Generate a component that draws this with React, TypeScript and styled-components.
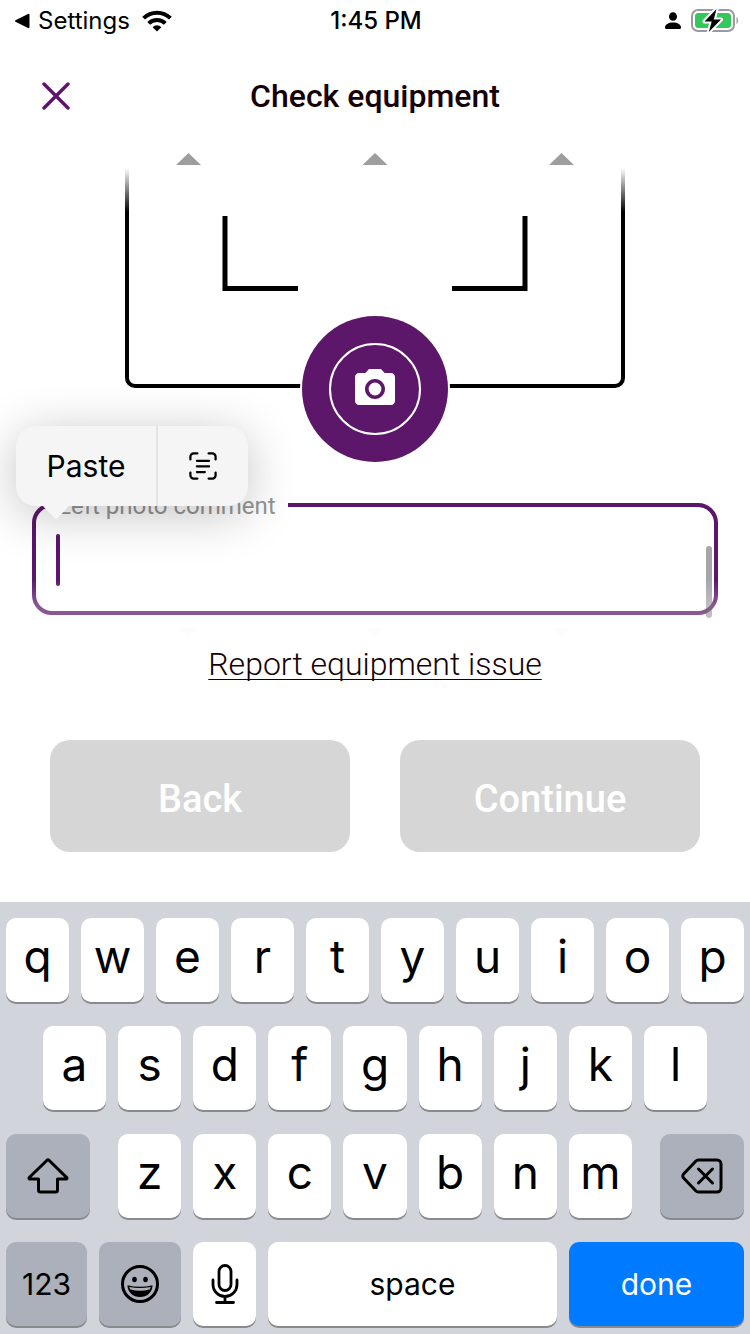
import React from "react";
import styled, { createGlobalStyle, css } from "styled-components";
import { MdCameraAlt } from "react-icons/md";

const purple = "#5c166a";
const brandFont = `Roboto, "Open Sans", sans-serif`;
const systemFont = `Inter, "Liberation Sans", sans-serif`;

const GlobalStyle = createGlobalStyle`
  * { box-sizing: border-box; }
  body { margin: 0; background: #fff; }
  button, textarea { font: inherit; color: inherit; border: 0; padding: 0; margin: 0; background: none; }
`;

const Screen = styled.div`
  display: flex;
  flex-direction: column;
  min-height: 100vh;
  background: #fff;
  color: #000;
  font-family: ${systemFont};
`;

const StatusBar = styled.div`
  display: grid;
  grid-template-columns: 1fr auto 1fr;
  align-items: center;
  height: 40px;
  padding: 2px 12px 0 14px;
  font-size: 24px;
  line-height: 32px;
`;

const StatusGroup = styled.div<{ $end?: boolean }>`
  display: flex;
  align-items: center;
  gap: ${(p) => (p.$end ? 10 : 12)}px;
  justify-content: ${(p) => (p.$end ? "flex-end" : "flex-start")};
`;

const BackToApp = styled.a`
  display: flex;
  align-items: center;
  gap: 8px;
  color: inherit;
  text-decoration: none;
`;

const Clock = styled.time`
  font-weight: 500;
`;

const Header = styled.header`
  display: grid;
  grid-template-columns: 48px 1fr 48px;
  align-items: center;
  height: 112px;
  padding: 0 32px;
`;

const CloseButton = styled.button`
  display: grid;
  place-items: center;
  width: 48px;
  height: 48px;
`;

const Title = styled.h1`
  margin: 0;
  text-align: center;
  font: 500 32px/48px ${brandFont};
  color: #140005;
`;

const Main = styled.main`
  display: flex;
  flex-direction: column;
  flex: 1;
`;

const Viewfinder = styled.section`
  display: flex;
  flex-direction: column;
  align-items: center;
  padding: 0 16px;
`;

const FrameDrawing = styled.svg`
  display: block;
  width: 100%;
  max-width: 500px;
`;

const ShutterButton = styled.button`
  display: grid;
  place-items: center;
  width: 146px;
  height: 146px;
  margin-top: -72px;
  border-radius: 50%;
  background: ${purple};
  box-shadow: 0 0 0 2px #fff;
  color: #fff;
`;

const ShutterRing = styled.span`
  display: grid;
  place-items: center;
  width: 92px;
  height: 92px;
  border: 2px solid #fff;
  border-radius: 50%;
`;

const CommentArea = styled.section`
  position: relative;
  margin-top: 27px;
  padding: 0 32px;
`;

const CommentField = styled.fieldset`
  display: block;
  height: 126px;
  min-width: 0;
  margin: 0;
  padding: 0 20px;
  border: 4px solid ${purple};
  border-radius: 20px;
`;

const CommentLegend = styled.legend`
  height: 32px;
  margin-left: -8px;
  padding: 0 12px 0 10px;
  font: 400 24px/34px ${brandFont};
  color: #949494;
`;

const CommentInput = styled.div`
  display: flex;
  align-items: center;
  height: 78px;
`;

const Caret = styled.span`
  width: 4px;
  height: 52px;
  border-radius: 2px;
  background: ${purple};
`;

const CommentText = styled.textarea`
  flex: 1;
  height: 52px;
  resize: none;
  outline: none;
  overflow: hidden;
  caret-color: transparent;
  font-size: 32px;
  line-height: 52px;
`;

const ScrollThumb = styled.span`
  position: absolute;
  right: 38px;
  top: 57px;
  width: 6px;
  height: 72px;
  border-radius: 3px;
  background: rgba(60, 60, 64, 0.46);
`;

const BottomFade = styled.div`
  position: absolute;
  left: 0;
  right: 0;
  bottom: -8px;
  height: 44px;
  background: linear-gradient(rgba(255, 255, 255, 0), rgba(255, 255, 255, 0.28) 60%);
  pointer-events: none;
`;

const EditMenu = styled.div`
  position: absolute;
  left: 16px;
  top: -63px;
  display: flex;
  height: 80px;
  border-radius: 20px;
  background: #f5f5f5;
  box-shadow: 0 8px 50px rgba(0, 0, 0, 0.24);
`;

const EditMenuItem = styled.button<{ $divided?: boolean }>`
  display: grid;
  place-items: center;
  width: ${(p) => (p.$divided ? 92 : 140)}px;
  font-size: 30px;
  line-height: 40px;
  ${(p) =>
    p.$divided &&
    css`
      border-left: 2px solid #e4e4e4;
    `}
`;

const EditMenuTail = styled.svg`
  position: absolute;
  left: 26px;
  top: 79px;
`;

const Hints = styled.svg`
  display: block;
  width: 100%;
  max-width: 500px;
  height: 10px;
  margin: 13px auto 0;
`;

const Footer = styled.footer`
  display: flex;
  flex-direction: column;
  align-items: center;
  margin-top: auto;
  padding: 2px 50px 50px;
`;

const IssueLink = styled.a`
  margin-bottom: 52px;
  font: 300 32px/48px ${brandFont};
  color: #140005;
  text-decoration-thickness: 1px;
  text-underline-offset: 4px;
  text-decoration-skip-ink: none;
`;

const Actions = styled.div`
  display: flex;
  gap: 50px;
  width: 100%;
`;

const ActionButton = styled.button`
  flex: 1;
  height: 112px;
  padding-top: 6px;
  border-radius: 20px;
  background: #d6d6d6;
  color: #fff;
  font: 500 38px/48px ${brandFont};
`;

const Keyboard = styled.div`
  display: flex;
  flex-direction: column;
  gap: 24px;
  padding: 16px 6px 8px;
  background: #d1d4da;
`;

const KeyRow = styled.div<{ $inset?: boolean }>`
  display: flex;
  gap: 12px;
  padding: 0 ${(p) => (p.$inset ? "5%" : "0")};
`;

const Letters = styled.div`
  display: flex;
  flex: 513 1 0;
  gap: 12px;
  margin: 0 16px;
`;

const Key = styled.button<{ $weight?: number; $tone?: "grey" | "blue"; $word?: boolean }>`
  display: flex;
  align-items: center;
  justify-content: center;
  flex: ${(p) => p.$weight ?? 63} 1 0;
  min-width: 0;
  height: 84px;
  padding-bottom: ${(p) => (p.$word ? 0 : 8)}px;
  border-radius: 10px;
  background: ${(p) => (p.$tone === "grey" ? "#abb0ba" : p.$tone === "blue" ? "#007aff" : "#fff")};
  color: ${(p) => (p.$tone === "blue" ? "#fff" : "#000")};
  box-shadow: 0 2px 0 #898a8d;
  font-size: ${(p) => (p.$word ? 30 : 46)}px;
  font-weight: 400;
  line-height: 1;
`;

const IconKey = styled(Key)`
  padding-bottom: 0;
`;

function FrameGuides() {
  return (
    <FrameDrawing viewBox="0 0 500 236" aria-hidden="true">
      <defs>
        <linearGradient id="edgeFade" gradientUnits="userSpaceOnUse" x1="0" y1="16" x2="0" y2="60">
          <stop offset="0" stopColor="#000" stopOpacity="0" />
          <stop offset="1" stopColor="#000" />
        </linearGradient>
      </defs>
      <path d="M51 13 63.500 1 76 13zM237.500 13 250 1 262.500 13zM424 13 436.500 1 449 13z" fill="#9e9e9e" />
      <path d="M2 16V226a8 8 0 0 0 8 8H490a8 8 0 0 0 8-8V16" fill="none" stroke="url(#edgeFade)" strokeWidth="4" />
      <path d="M100 64V136.500H173M400 64V136.500H327" fill="none" stroke="#000" strokeWidth="5" />
    </FrameDrawing>
  );
}

function WifiIcon() {
  return (
    <svg width="30" height="22" viewBox="0 0 30 22" aria-hidden="true">
      <g fill="none" stroke="#000" strokeWidth="4">
        <path d="M1.600 8.200a19 19 0 0 1 26.800 0" />
        <path d="M6.700 13.400a11.700 11.700 0 0 1 16.600 0" />
      </g>
      <path d="M15 21.600 10.600 17.200a6.200 6.200 0 0 1 8.800 0z" />
    </svg>
  );
}

function BatteryIcon() {
  return (
    <svg width="47" height="24" viewBox="0 0 47 24" aria-hidden="true">
      <rect x="1" y="1" width="42" height="21" rx="6" fill="none" stroke="#9b9b9d" strokeWidth="2" />
      <path d="M45.500 8c2 1 2 6 0 7z" fill="#9b9b9d" />
      <rect x="4" y="4" width="36" height="15" rx="3.500" fill="#34c759" />
      <path
        d="M25.500 0 13.500 12.500h7.200L17.800 23 30 10.500h-7.200z"
        fill="#000"
        stroke="#fff"
        strokeWidth="4"
        strokeLinejoin="round"
        paintOrder="stroke"
      />
    </svg>
  );
}

function ScanTextIcon() {
  return (
    <svg width="28" height="28" viewBox="0 0 30 30" fill="none" stroke="#000" strokeWidth="2.400" strokeLinecap="round" aria-hidden="true">
      <path d="M1.500 8V5a3.500 3.500 0 0 1 3.500-3.500H9M21 1.500h4A3.500 3.500 0 0 1 28.500 5v3M28.500 22v3a3.500 3.500 0 0 1-3.500 3.500h-4M9 28.500H5A3.500 3.500 0 0 1 1.500 25v-3" />
      <path d="M8.500 9.500h13M8.500 15.500h13M8.500 21.500h8.500" />
    </svg>
  );
}

function ShiftIcon() {
  return (
    <svg width="42" height="36" viewBox="0 0 42 36" fill="none" stroke="#000" strokeWidth="3" strokeLinejoin="round" aria-hidden="true">
      <path d="M19.800 2.500a1.700 1.700 0 0 1 2.400 0L39.500 19.300c.9.900.5 1.700-.5 1.700H30.500V32a2 2 0 0 1-2 2h-15a2 2 0 0 1-2-2V21H3c-1 0-1.400-.8-.5-1.700z" />
    </svg>
  );
}

function DeleteIcon() {
  return (
    <svg width="42" height="36" viewBox="0 0 42 36" fill="none" stroke="#000" strokeWidth="3" strokeLinecap="round" strokeLinejoin="round" aria-hidden="true">
      <path d="M17.500 2H36a4 4 0 0 1 4 4v24a4 4 0 0 1-4 4H17.500a4 4 0 0 1-2.800-1.200L2.600 20a2.800 2.800 0 0 1 0-4L14.700 3.200A4 4 0 0 1 17.500 2z" />
      <path d="M17.500 11l14 14M31.500 11l-14 14" />
    </svg>
  );
}

function EmojiIcon() {
  return (
    <svg width="38" height="38" viewBox="0 0 38 38" aria-hidden="true">
      <circle cx="19" cy="19" r="17.500" fill="none" stroke="#000" strokeWidth="3" />
      <ellipse cx="13.500" cy="14.500" rx="2.300" ry="2.800" />
      <ellipse cx="24.500" cy="14.500" rx="2.300" ry="2.800" />
      <path d="M6.500 20.300q12.500 3 25 0C31.500 27.500 26 32 19 32S6.500 27.500 6.500 20.300z" />
      <path d="M8.300 21.900q10.700 2.200 21.400 0l-.8 2.300q-9.900 3.200-19.800 0z" fill="#abb0ba" />
    </svg>
  );
}

function MicIcon() {
  return (
    <svg width="28" height="40" viewBox="0 0 28 40" fill="none" stroke="#000" strokeWidth="2.800" strokeLinecap="round" aria-hidden="true">
      <rect x="8" y="1.500" width="12" height="25" rx="6" />
      <path d="M2 16v4.500a12 12 0 0 0 24 0V16M14 32.500v6M5.500 38.500h17" />
    </svg>
  );
}

export default function App() {
  return (
    <Screen>
      <GlobalStyle />
      <StatusBar>
        <StatusGroup>
          <BackToApp href="#settings">
            <svg width="16" height="16" viewBox="0 0 16 16" aria-hidden="true">
              <path d="M1.500 7.200 14 1q1.500-.6 1.500 1v12q0 1.600-1.500 1L1.500 8.800q-1.400-.8 0-1.600z" />
            </svg>
            Settings
          </BackToApp>
          <WifiIcon />
        </StatusGroup>
        <Clock>1:45 PM</Clock>
        <StatusGroup $end>
          <svg width="16" height="18" viewBox="0 0 16 18" aria-hidden="true">
            <ellipse cx="8" cy="4.500" rx="4" ry="4.300" />
            <path d="M0 15.500C0 12.500 3.500 10.500 8 10.500s8 2 8 5q0 1.500-1.500 1.500h-13Q0 17 0 15.500z" />
          </svg>
          <BatteryIcon />
        </StatusGroup>
      </StatusBar>

      <Header>
        <CloseButton aria-label="Close">
          <svg width="28" height="28" viewBox="0 0 28 28" stroke={purple} strokeWidth="3.500" strokeLinecap="round" aria-hidden="true">
            <path d="M2 2l24 24M26 2 2 26" />
          </svg>
        </CloseButton>
        <Title>Check equipment</Title>
      </Header>

      <Main>
        <Viewfinder>
          <FrameGuides />
          <ShutterButton aria-label="Take photo">
            <ShutterRing>
              <MdCameraAlt size={48} />
            </ShutterRing>
          </ShutterButton>
        </Viewfinder>

        <CommentArea>
          <CommentField>
            <CommentLegend>
              <label htmlFor="comment">Left photo comment</label>
            </CommentLegend>
            <CommentInput>
              <Caret />
              <CommentText id="comment" rows={1} />
            </CommentInput>
          </CommentField>
          <ScrollThumb />
          <BottomFade />
          <EditMenu>
            <EditMenuItem>Paste</EditMenuItem>
            <EditMenuItem $divided aria-label="Scan text">
              <ScanTextIcon />
            </EditMenuItem>
            <EditMenuTail width="28" height="15" viewBox="0 0 28 15" aria-hidden="true">
              <path d="M0 0h28L15.500 13.200q-1.500 1.500-3 0z" fill="#f5f5f5" />
            </EditMenuTail>
          </EditMenu>
        </CommentArea>

        <Hints viewBox="0 0 500 10" aria-hidden="true">
          <path d="M54 0h18l-9 9zM241 0h18l-9 9zM427 0h18l-9 9z" fill="#fcfcfc" />
        </Hints>

        <Footer>
          <IssueLink href="#report">Report equipment issue</IssueLink>
          <Actions>
            <ActionButton>Back</ActionButton>
            <ActionButton>Continue</ActionButton>
          </Actions>
        </Footer>
      </Main>

      <Keyboard>
        <KeyRow>
          {[..."qwertyuiop"].map((k) => (
            <Key key={k}>{k}</Key>
          ))}
        </KeyRow>
        <KeyRow $inset>
          {[..."asdfghjkl"].map((k) => (
            <Key key={k}>{k}</Key>
          ))}
        </KeyRow>
        <KeyRow>
          <IconKey $weight={84} $tone="grey" aria-label="Shift">
            <ShiftIcon />
          </IconKey>
          <Letters>
            {[..."zxcvbnm"].map((k) => (
              <Key key={k}>{k}</Key>
            ))}
          </Letters>
          <IconKey $weight={84} $tone="grey" aria-label="Delete">
            <DeleteIcon />
          </IconKey>
        </KeyRow>
        <KeyRow>
          <Key $weight={81} $tone="grey" $word>
            123
          </Key>
          <IconKey $weight={82} $tone="grey" aria-label="Emoji">
            <EmojiIcon />
          </IconKey>
          <IconKey aria-label="Dictate">
            <MicIcon />
          </IconKey>
          <Key $weight={289} $word>
            space
          </Key>
          <Key $weight={175} $tone="blue" $word>
            done
          </Key>
        </KeyRow>
      </Keyboard>
    </Screen>
  );
}
